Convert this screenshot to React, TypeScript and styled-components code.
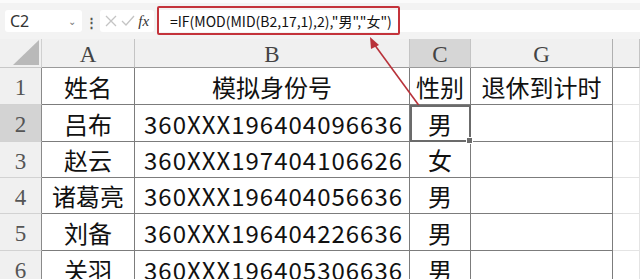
import { Fragment } from 'react';
import styled, { createGlobalStyle } from 'styled-components';

const GlobalStyle = createGlobalStyle`
  html, body {
    margin: 0;
    padding: 0;
    background: #ffffff;
  }
  body {
    width: 640px;
    height: 279px;
    overflow: hidden;
    font-family: "Noto Sans CJK SC", "Noto Sans", sans-serif;
  }
`;

const Page = styled.div`
  position: relative;
  width: 640px;
  height: 279px;
  overflow: hidden;
  background: #ffffff;
`;

const TopStrip = styled.div`
  height: 3px;
  background: #fbfbfb;
`;

const FormulaBar = styled.div`
  height: 36px;
  background: #f3f3f3;
  display: flex;
  align-items: center;
  padding-left: 5px;
  box-sizing: border-box;
`;

const NameBox = styled.div`
  width: 77px;
  height: 22px;
  background: #ffffff;
  border-radius: 3px;
  display: flex;
  align-items: center;
  justify-content: space-between;
  padding: 0 6px 0 5px;
  box-sizing: border-box;
  font-size: 16px;
  color: #333;
  font-family: "Noto Sans", sans-serif;
`;

const Chevron = styled.span`
  font-size: 10px;
  color: #777;
`;

const Dots = styled.div`
  width: 18px;
  text-align: center;
  color: #555;
  font-size: 13px;
  font-weight: bold;
`;

const IconBox = styled.div`
  width: 54px;
  height: 22px;
  background: #ffffff;
  border-radius: 3px;
  display: flex;
  align-items: center;
  justify-content: space-around;
  padding: 0 3px;
  box-sizing: border-box;
  margin-right: 3px;
`;

const Fx = styled.span`
  font-family: "Liberation Serif", serif;
  font-style: italic;
  font-size: 15px;
  color: #333;
`;

const FormulaInput = styled.div`
  position: relative;
  flex: 1;
  height: 22px;
  background: #ffffff;
  display: flex;
  align-items: center;
  padding-left: 13px;
  font-size: 14px;
  color: #111;
  font-family: "Noto Sans CJK SC", "Noto Sans", sans-serif;
  white-space: nowrap;
`;

const Highlight = styled.div`
  position: absolute;
  left: 0;
  top: -4px;
  width: 243px;
  height: 29px;
  border: 2px solid #c4333b;
  border-radius: 2px;
  box-sizing: border-box;
`;

const Sheet = styled.div`
  display: grid;
  grid-template-columns: 42px 93px 275px 61px 142px 1fr;
  grid-template-rows: 29px 37px 37px 36px 36px 37px 37px;
`;

const Corner = styled.div`
  background: #f0f0f0;
  border-right: 1px solid #d0d0d0;
  border-bottom: 1px solid #c8c8c8;
  display: flex;
  align-items: flex-end;
  justify-content: flex-end;
  padding: 0 2px 2px 0;
  box-sizing: border-box;
`;

const ColHead = styled.div<{ $sel?: boolean; $edge?: boolean }>`
  background: ${(p) => (p.$sel ? '#d6d6d6' : '#f0f0f0')};
  border-right: 1px solid ${(p) => (p.$edge ? '#b0b0b0' : '#c4c4c4')};
  border-bottom: 1px solid #9a9a9a;
  display: flex;
  align-items: center;
  justify-content: center;
  font-family: "Liberation Serif", serif;
  font-size: 23px;
  color: #444;
  box-sizing: border-box;
  padding-top: 4px;
`;

const RowHead = styled.div<{ $sel?: boolean }>`
  background: ${(p) => (p.$sel ? '#d3d3d3' : '#f0f0f0')};
  border-right: 1px solid #8a8a8a;
  border-bottom: 1px solid #d2d2d2;
  display: flex;
  align-items: center;
  justify-content: center;
  font-family: "Liberation Serif", serif;
  font-size: 23px;
  color: #555;
  box-sizing: border-box;
  padding-top: 4px;
`;

const Cell = styled.div<{ $align?: 'left' | 'center'; $sel?: boolean; $outside?: boolean }>`
  position: relative;
  background: #ffffff;
  border-right: 1px solid ${(p) => (p.$outside ? '#e4e4e4' : '#7c7c7c')};
  border-bottom: 1px solid ${(p) => (p.$outside ? '#e4e4e4' : '#7c7c7c')};
  display: flex;
  align-items: center;
  justify-content: ${(p) => (p.$align === 'left' ? 'flex-start' : 'center')};
  padding-left: ${(p) => (p.$align === 'left' ? '9px' : '0')};
  letter-spacing: ${(p) => (p.$align === 'left' ? '1px' : '0')};
  font-size: 24px;
  color: #111;
  box-sizing: border-box;
  white-space: nowrap;
  ${(p) => (p.$sel ? 'outline: 2px solid #6b6b6b; outline-offset: -2px; z-index: 1;' : '')}
`;

const Handle = styled.span`
  position: absolute;
  right: -3px;
  bottom: -3px;
  width: 5px;
  height: 5px;
  background: #6b6b6b;
  border: 1px solid #ffffff;
`;

const ArrowLayer = styled.svg`
  position: absolute;
  left: 0;
  top: 0;
  pointer-events: none;
`;

const rows = [
  ['姓名', '模拟身份号', '性别', '退休到计时'],
  ['吕布', '360XXX196404096636', '男', ''],
  ['赵云', '360XXX197404106626', '女', ''],
  ['诸葛亮', '360XXX196404056636', '男', ''],
  ['刘备', '360XXX196404226636', '男', ''],
  ['关羽', '360XXX196405306636', '男', ''],
];

export default function App() {
  return (
    <Page>
      <GlobalStyle />
      <TopStrip />
      <FormulaBar>
        <NameBox>
          C2
          <Chevron>⌄</Chevron>
        </NameBox>
        <Dots>⋮</Dots>
        <IconBox>
          <svg width='12' height='12' viewBox='0 0 12 12'>
            <path d='M1 1 L11 11 M11 1 L1 11' stroke='#c4c4c4' strokeWidth='1.3' fill='none' />
          </svg>
          <svg width='14' height='12' viewBox='0 0 14 12'>
            <path d='M1 6 L5 10 L13 1' stroke='#c4c4c4' strokeWidth='1.3' fill='none' />
          </svg>
          <Fx>fx</Fx>
        </IconBox>
        <FormulaInput>
          =IF(MOD(MID(B2,17,1),2),"男","女")
          <Highlight />
        </FormulaInput>
      </FormulaBar>
      <Sheet>
        <Corner>
          <svg width='26' height='25' viewBox='0 0 26 25'>
            <polygon points='26,0 26,25 0,25' fill='#b9b9b9' />
          </svg>
        </Corner>
        <ColHead>A</ColHead>
        <ColHead>B</ColHead>
        <ColHead $sel>C</ColHead>
        <ColHead $edge>G</ColHead>
        <ColHead />
        {rows.map((r, i) => (
          <Fragment key={i}>
            <RowHead $sel={i === 1}>{i + 1}</RowHead>
            <Cell>{r[0]}</Cell>
            <Cell $align={i === 0 ? 'center' : 'left'}>{r[1]}</Cell>
            <Cell $sel={i === 1}>
              {r[2]}
              {i === 1 && <Handle />}
            </Cell>
            <Cell>{r[3]}</Cell>
            <Cell $outside />
          </Fragment>
        ))}
      </Sheet>
      <ArrowLayer width='640' height='279' viewBox='0 0 640 279'>
        <line x1='431' y1='122' x2='374' y2='44' stroke='#b8323a' strokeWidth='1.6' />
        <polygon points='370,37 379,45 371,49' fill='#b8323a' />
      </ArrowLayer>
    </Page>
  );
}
